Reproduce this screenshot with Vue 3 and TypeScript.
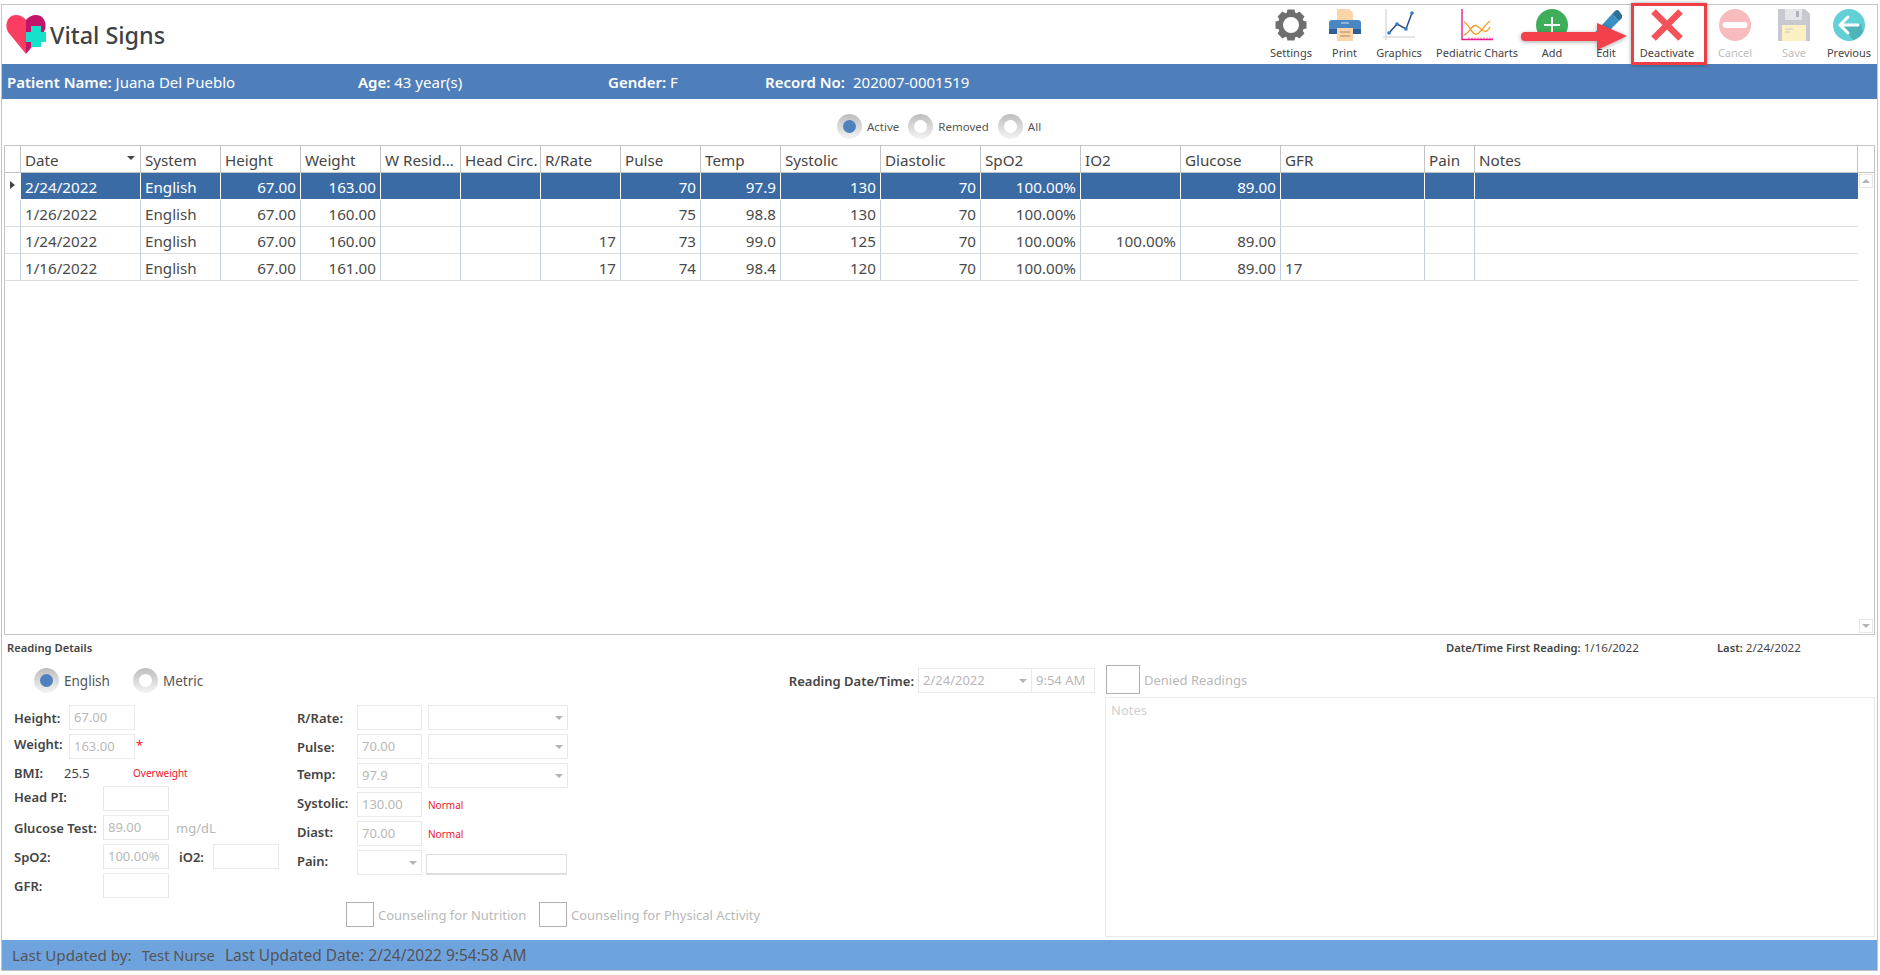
<script setup lang="ts">
interface Col { key: string; label: string; right?: boolean }
const cols: Col[] = [
  { key: 'date', label: 'Date' }, { key: 'system', label: 'System' },
  { key: 'height', label: 'Height', right: true }, { key: 'weight', label: 'Weight', right: true },
  { key: 'wres', label: 'W Resid...', right: true }, { key: 'head', label: 'Head Circ.', right: true },
  { key: 'rr', label: 'R/Rate', right: true }, { key: 'pulse', label: 'Pulse', right: true },
  { key: 'temp', label: 'Temp', right: true }, { key: 'sys', label: 'Systolic', right: true },
  { key: 'dia', label: 'Diastolic', right: true }, { key: 'spo2', label: 'SpO2', right: true },
  { key: 'io2', label: 'IO2', right: true }, { key: 'glu', label: 'Glucose', right: true },
  { key: 'gfr', label: 'GFR' }, { key: 'pain', label: 'Pain' }, { key: 'notes', label: 'Notes' },
]
const rows: Record<string, string>[] = [
  { date: '2/24/2022', system: 'English', height: '67.00', weight: '163.00', pulse: '70', temp: '97.9', sys: '130', dia: '70', spo2: '100.00%', glu: '89.00' },
  { date: '1/26/2022', system: 'English', height: '67.00', weight: '160.00', pulse: '75', temp: '98.8', sys: '130', dia: '70', spo2: '100.00%' },
  { date: '1/24/2022', system: 'English', height: '67.00', weight: '160.00', rr: '17', pulse: '73', temp: '99.0', sys: '125', dia: '70', spo2: '100.00%', io2: '100.00%', glu: '89.00' },
  { date: '1/16/2022', system: 'English', height: '67.00', weight: '161.00', rr: '17', pulse: '74', temp: '98.4', sys: '120', dia: '70', spo2: '100.00%', glu: '89.00', gfr: '17' },
]
const teeth = [0, 45, 90, 135, 180, 225, 270, 315]
const ticks = [8, 11, 14, 17, 20, 23, 26, 29, 32]
</script>

<template>
  <div class="app">
    <header class="top">
      <div class="brand">
        <svg class="logo" viewBox="0 0 40 39" width="40" height="39">
          <path d="M20 39 L2 17 C-2 9 2 0 10 0 C14 0 18 2 20 5 Z" fill="#fb3d62" />
          <path d="M20 39 L38 17 C42 9 38 0 30 0 C26 0 22 2 20 5 Z" fill="#c4146a" />
          <path d="M25 11 H35 V17 H40 V27 H35 V32 H25 V27 H20 V17 H25 Z" fill="#16e2cc" />
        </svg>
        <span class="title">Vital Signs</span>
      </div>
      <nav class="tools">
        <div class="tool">
          <svg class="ico" viewBox="0 0 32 32">
            <path v-for="t in teeth" :key="t" d="M12.5 0.5 H19.5 L21 7 H11 Z" fill="#6f6f6f" :transform="`rotate(${t} 16 16)`" />
            <circle cx="16" cy="16" r="10.5" fill="none" stroke="#6f6f6f" stroke-width="5" />
          </svg>
          <span>Settings</span>
        </div>
        <div class="tool">
          <svg class="ico" viewBox="0 0 32 32">
            <path d="M8 0 H20 L24 4 V11 H8 Z" fill="#fbd5a8" />
            <path d="M3 11 H29 Q32 11 32 14 V25 H0 V14 Q0 11 3 11 Z" fill="#4a86c4" />
            <rect x="0" y="20" width="32" height="5" fill="#2f5f98" />
            <path d="M12 14 H20" stroke="#cfe0f0" stroke-width="1" />
            <rect x="8" y="19" width="16" height="13" fill="#fbd5a8" />
            <path d="M11 23 H21 M11 27 H21" stroke="#b08a60" stroke-width="1.2" />
          </svg>
          <span>Print</span>
        </div>
        <div class="tool">
          <svg class="ico" viewBox="0 0 32 32">
            <path d="M3 0 V31 M0 28 H32" stroke="#dcdcdc" stroke-width="1.4" fill="none" />
            <polyline points="6,24 14,15 23,20 29,4" fill="none" stroke="#2c4f80" stroke-width="1.5" />
            <g fill="#2f80d0">
              <circle cx="6" cy="24" r="1.8" /><circle cx="14" cy="15" r="1.8" />
              <circle cx="23" cy="20" r="1.8" /><circle cx="29" cy="4" r="1.8" />
            </g>
          </svg>
          <span>Graphics</span>
        </div>
        <div class="tool">
          <svg class="ico" viewBox="0 0 32 32">
            <path d="M1 0 V30.5 H32" stroke="#ec1c8c" stroke-width="1.4" fill="none" />
            <path v-for="x in ticks" :key="x" :d="`M${x} 28.5 V30`" stroke="#ec1c8c" stroke-width="0.8" />
            <path d="M3 13 C9 16 11 27 16 25 C21 23 24 15 29 12" fill="none" stroke="#f59a1e" stroke-width="1.3" />
            <path d="M3 26 C9 24 11 14 16 17 C21 20 24 27 29 18" fill="none" stroke="#f59a1e" stroke-width="1.3" />
          </svg>
          <span>Pediatric Charts</span>
        </div>
        <div class="tool">
          <svg class="ico" viewBox="0 0 32 32">
            <circle cx="16" cy="16" r="16" fill="#3fae5a" />
            <path d="M16 8 V24 M8 16 H24" stroke="#fff" stroke-width="2" />
          </svg>
          <span>Add</span>
        </div>
        <div class="tool">
          <svg class="ico" viewBox="0 0 32 32">
            <path d="M2 27 L22 5 L29 12 L9 32 H2 Z" fill="#3a8fc0" />
            <path d="M22 5 L25 2 Q27 0 29 2 L32 6 Q33 8 31 10 L29 12 Z" fill="#2a7099" />
          </svg>
          <span>Edit</span>
        </div>
        <div class="tool">
          <svg class="ico" viewBox="0 0 32 32">
            <path d="M2.5 2.5 L29.5 29.5 M29.5 2.5 L2.5 29.5" stroke="#f4525a" stroke-width="6.5" />
          </svg>
          <span>Deactivate</span>
        </div>
        <div class="tool off">
          <svg class="ico" viewBox="0 0 32 32">
            <circle cx="16" cy="16" r="16" fill="#f8bcbf" />
            <rect x="3.5" y="13" width="25" height="6" rx="3" fill="#fff" />
          </svg>
          <span>Cancel</span>
        </div>
        <div class="tool off">
          <svg class="ico" viewBox="0 0 32 32">
            <path d="M0 0 H27 L32 5 V32 H0 Z" fill="#c6c9d0" />
            <rect x="7" y="0" width="17" height="11" fill="#e4e5e8" />
            <rect x="18" y="2" width="3" height="6" fill="#b0b3ba" />
            <rect x="4" y="16" width="24" height="16" fill="#fbefc4" />
            <path d="M7 20 H15 M7 23 H12" stroke="#c6c9d0" stroke-width="1" />
          </svg>
          <span>Save</span>
        </div>
        <div class="tool">
          <svg class="ico" viewBox="0 0 32 32">
            <circle cx="16" cy="16" r="16" fill="#63cfd6" />
            <path d="M16 15 L28 15 L30 23 A16 16 0 0 1 20 31 L9 17 Z" fill="#4fb3ba" />
            <path d="M15 8 L7 16 L15 24 M7 16 H25" fill="none" stroke="#fff" stroke-width="3" stroke-linecap="round" stroke-linejoin="round" />
          </svg>
          <span>Previous</span>
        </div>
      </nav>
      <div class="highlight"></div>
      <svg class="pointer" viewBox="0 0 108 30" width="108" height="30">
        <path d="M4 10 H76 V1 L106 14 L76 28 V19 H4 Q0 19 0 14.5 Q0 10 4 10 Z" fill="#f4404a" />
      </svg>
    </header>

    <section class="patient">
      <div><b>Patient Name:</b> Juana Del Pueblo</div>
      <div><b>Age:</b> 43 year(s)</div>
      <div><b>Gender:</b> F</div>
      <div><b>Record No:</b><span class="rec">202007-0001519</span></div>
    </section>

    <section class="filters">
      <label class="radio"><i class="dot on"></i>Active</label>
      <label class="radio"><i class="dot"></i>Removed</label>
      <label class="radio"><i class="dot"></i>All</label>
    </section>

    <section class="grid">
      <div class="headrow cols">
        <div class="hc"></div>
        <div v-for="c in cols" :key="c.key" class="hc" :class="{ sorted: c.key === 'date' }">{{ c.label }}</div>
        <div class="hc end"></div>
      </div>
      <div class="gridbody">
        <div class="rowsarea">
          <div v-for="(r, i) in rows" :key="i" class="row cols" :class="{ sel: i === 0 }">
            <div class="rh"><i v-if="i === 0" class="cur"></i></div>
            <div v-for="c in cols" :key="c.key" class="td" :class="{ right: c.right }">{{ r[c.key] }}</div>
          </div>
        </div>
        <div class="vscroll">
          <div class="sbtn"><i class="up"></i></div>
          <div class="sbtn"><i class="down"></i></div>
        </div>
      </div>
    </section>

    <section class="details">
      <div class="dhead">
        <b class="dtitle">Reading Details</b>
        <span class="first"><b>Date/Time First Reading:</b> 1/16/2022</span>
        <span class="last"><b>Last:</b> 2/24/2022</span>
      </div>
      <div class="dbody">
        <div class="dleft">
          <div class="dtop">
            <label class="radio big"><i class="dot on"></i>English</label>
            <label class="radio big"><i class="dot"></i>Metric</label>
            <div class="when">
              <b>Reading Date/Time:</b>
              <div class="box datebox">2/24/2022<i class="arrow"></i></div>
              <div class="box timebox">9:54 AM</div>
            </div>
          </div>
          <div class="form">
            <div class="fa">
              <div class="fr"><b class="l55">Height:</b><div class="box w66">67.00</div></div>
              <div class="fr"><b class="l55 rise3">Weight:</b><div class="box w66">163.00</div><span class="star">*</span></div>
              <div class="fr bmi"><b class="l50">BMI:</b><span class="bmiv">25.5</span><span class="red">Overweight</span></div>
              <div class="fr"><b class="l89 rise">Head PI:</b><div class="box w66"></div></div>
              <div class="fr"><b class="l89">Glucose Test:</b><div class="box w66">89.00</div><span class="unit">mg/dL</span></div>
              <div class="fr"><b class="l89">SpO2:</b><div class="box w66">100.00%</div><b class="io">iO2:</b><div class="box w66"></div></div>
              <div class="fr"><b class="l89">GFR:</b><div class="box w66"></div></div>
            </div>
            <div class="fb">
              <div class="fr"><b class="l60">R/Rate:</b><div class="box w65"></div><div class="box sel140"><i class="arrow"></i></div></div>
              <div class="fr"><b class="l60">Pulse:</b><div class="box w65">70.00</div><div class="box sel140"><i class="arrow"></i></div></div>
              <div class="fr"><b class="l60 rise">Temp:</b><div class="box w65">97.9</div><div class="box sel140"><i class="arrow"></i></div></div>
              <div class="fr"><b class="l60 rise">Systolic:</b><div class="box w65">130.00</div><span class="red norm">Normal</span></div>
              <div class="fr"><b class="l60 rise">Diast:</b><div class="box w65">70.00</div><span class="red norm">Normal</span></div>
              <div class="fr"><b class="l60 rise">Pain:</b><div class="box w65 sel65"><i class="arrow"></i></div><div class="paintxt"></div></div>
            </div>
          </div>
          <div class="counsel">
            <label class="chk first-chk"><i class="cb"></i>Counseling for Nutrition</label>
            <label class="chk"><i class="cb"></i>Counseling for Physical Activity</label>
          </div>
        </div>
        <div class="dright">
          <label class="chk denied"><i class="cb big"></i>Denied Readings</label>
          <div class="notes">Notes</div>
        </div>
      </div>
    </section>

    <footer class="status">
      <span>Last Updated by:</span>
      <span class="who">Test Nurse</span>
      <span class="stamp">Last Updated Date: 2/24/2022 9:54:58 AM</span>
    </footer>
  </div>
</template>

<style>
html, body { margin: 0; background: #fff; }
</style>

<style scoped>
.app {
  position: relative;
  box-sizing: border-box;
  width: 1877px;
  height: 967px;
  margin: 4px 0 0 1px;
  border: 1px solid #c4c4c4;
  font-family: "Noto Sans", "Open Sans", sans-serif;
  font-size: 15px;
  color: #444;
  background: #fff;
  display: flex;
  flex-direction: column;
}
b { font-weight: 600; }
i { font-style: normal; display: block; }

.top { position: relative; height: 59px; display: flex; justify-content: space-between; }
.brand { display: flex; align-items: flex-start; padding: 10px 0 0 4px; }
.logo { display: block; }
.title { font-size: 23.4px; font-weight: 500; color: #3f3f46; line-height: 40px; margin-left: 4px; }
.tools {
  display: grid;
  grid-template-columns: 52px 55px 54px 102px 48px 60px 62px 74px 44px 56px;
  margin-right: 5px;
}
.tool:last-child { margin-left: 10px; }
.tool { display: flex; flex-direction: column; align-items: center; padding-top: 4px; font-size: 11px; color: #444; white-space: nowrap; }
.tool.off { color: #bdbdbd; }
.ico { width: 32px; height: 32px; display: block; margin-bottom: 3px; }
.tool span { line-height: 17px; }
.highlight {
  position: absolute; left: 1629px; top: -2px; width: 76px; height: 62px; box-sizing: border-box;
  border: 3px solid #ee3e45; box-shadow: 0 0 4px rgba(0, 0, 0, 0.35); z-index: 3;
}
.pointer { position: absolute; left: 1519px; top: 17px; z-index: 3; filter: drop-shadow(0 1px 2px rgba(0, 0, 0, 0.35)); }

.patient {
  height: 35px; background: #4f7fba; color: #fff; padding-left: 5px;
  display: grid; grid-template-columns: 351px 250px 157px 1fr; align-items: center; font-size: 15px;
}
.rec { margin-left: 8px; }

.filters { display: flex; padding: 15px 0 6px 835px; height: 25px; box-sizing: content-box; }
.radio { display: flex; align-items: center; gap: 5px; font-size: 11.5px; color: #555; margin-right: 9px; }
.dot {
  width: 25px; height: 25px; border-radius: 50%; box-sizing: border-box; padding: 6px; flex: none;
  background: linear-gradient(#bdbdbd, #f4f4f4); position: relative;
}
.dot::after { content: ""; display: block; width: 13px; height: 13px; border-radius: 50%; background: #fff; }
.dot.on::after { background: #4f81bd; }

.grid { margin: 0 2px; height: 490px; box-sizing: border-box; border: 1px solid #c4c4c4; display: flex; flex-direction: column; }
.cols { display: grid; grid-template-columns: 16px 120px repeat(8, 80px) repeat(5, 100px) 144px 50px 383px; }
.headrow { height: 27px; box-sizing: border-box; border-bottom: 1px solid #c4c4c4; grid-template-columns: 16px 120px repeat(8, 80px) repeat(5, 100px) 144px 50px 383px 1fr; }
.hc { border-right: 1px solid #c4c4c4; padding: 0 4px; font-size: 15.2px; line-height: 28px; color: #454545; white-space: nowrap; overflow: hidden; position: relative; }
.hc.end { border-right: 0; }
.sorted::after {
  content: ""; position: absolute; right: 5px; top: 10px;
  border: 4px solid transparent; border-top: 4px solid #444; border-bottom: 0;
}
.gridbody { flex: 1; display: flex; min-height: 0; }
.rowsarea { width: 1853px; }
.row { height: 27px; box-sizing: border-box; border-bottom: 1px solid #dcdcdc; }
.rh { position: relative; border-right: 1px solid #c0cfe0; }
.cur { position: absolute; left: 5px; top: 8px; border: 4px solid transparent; border-left: 5px solid #444; border-right: 0; }
.td { border-right: 1px solid #c0cfe0; padding: 0 4px; line-height: 28px; height: 26px; font-size: 15.2px; color: #4a4a4a; white-space: nowrap; }
.td.right { text-align: right; }
.td:last-child { border-right: 0; }
.row.sel { background: #3a6ba5; border-bottom-color: #fff; }
.row.sel .td { color: #fff; border-right-color: #fff; }
.row.sel .rh { background: #fff; border-right-color: #fff; }
.vscroll { flex: 1; display: flex; flex-direction: column; justify-content: space-between; padding: 1px 0 1px; align-items: center; }
.sbtn { width: 14px; height: 14px; border: 1px solid #e6e6e6; box-sizing: border-box; display: flex; align-items: center; justify-content: center; }
.up { border: 4px solid transparent; border-bottom: 4px solid #b4b4b4; border-top: 0; }
.down { border: 4px solid transparent; border-top: 4px solid #b4b4b4; border-bottom: 0; }

.details { flex: 1; display: flex; flex-direction: column; min-height: 0; }
.dhead { height: 21px; padding-top: 5px; box-sizing: border-box; display: grid; grid-template-columns: 1439px 271px 1fr; padding-left: 5px; font-size: 11.6px; line-height: 16px; color: #444; }
.dhead b { font-size: 11.2px; }
.dbody { flex: 1; display: flex; min-height: 0; }
.dleft { width: 1103px; flex: none; }
.dtop { display: flex; height: 25px; margin-top: 12px; padding-left: 32px; padding-right: 10px; }
.radio.big { width: 99px; margin: 0; flex: none; font-size: 13.5px; }
.radio.big + .radio.big { width: auto; }
.when { margin-left: auto; display: flex; align-items: center; font-size: 13px; }
.when b { margin-right: 4px; }
.box { height: 25px; box-sizing: border-box; border: 1px solid #e9e9e9; color: #b8b8b8; font-size: 13px; line-height: 23px; padding-left: 4px; position: relative; background: #fff; }
.datebox { width: 114px; }
.timebox { width: 63px; border-left: 0; }
.arrow { position: absolute; right: 4px; top: 10px; border: 4px solid transparent; border-top: 4px solid #b4b4b4; border-bottom: 0; }
.form { display: flex; padding-top: 12px; height: 193px; box-sizing: content-box; }
.fa { width: 295px; padding-left: 12px; box-sizing: border-box; flex: none; }
.fr { display: flex; align-items: center; height: 25px; margin-bottom: 4px; font-size: 13px; color: #444; }
.fr b { white-space: nowrap; flex: none; }
.fr.bmi { height: 23px; margin-bottom: 0; align-items: flex-start; line-height: 20px; }
.rise { position: relative; top: -2px; }
.rise3 { position: relative; top: -3px; }
.l55 { width: 55px; }
.l50 { width: 50px; }
.l89 { width: 89px; }
.l60 { width: 60px; }
.w66 { width: 66px; }
.w65 { width: 65px; }
.bmiv { width: 69px; }
.red { color: #f0142d; font-size: 10px; }
.star { color: #f0142d; font-size: 13px; margin-left: 1px; position: relative; top: -2px; }
.unit { color: #b8b8b8; margin-left: 7px; }
.io { margin-left: 10px; width: 34px; }
.sel140 { width: 140px; margin-left: 6px; }
.norm { margin-left: 6px; }
.sel65 { padding: 0; }
.paintxt { width: 141px; height: 21px; box-sizing: border-box; margin-left: 4px; margin-top: 4px; border: 1px solid #dedede; border-bottom-width: 2px; }
.counsel { display: flex; padding: 4px 0 0 344px; }
.chk { display: flex; align-items: center; font-size: 13px; color: #b8b8b8; white-space: nowrap; }
.first-chk { width: 193px; flex: none; }
.cb { width: 28px; height: 25px; box-sizing: border-box; border: 1px solid #b0b0b0; margin-right: 4px; flex: none; }
.cb.big { width: 34px; height: 29px; }
.dright { flex: 1; display: flex; flex-direction: column; margin-right: 2px; min-width: 0; }
.denied { height: 29px; margin: 9px 0 3px 1px; }
.notes { height: 240px; box-sizing: border-box; border: 1px solid #e9e9e9; color: #d0d0d0; font-size: 13px; padding: 3px 5px; }

.status { height: 30px; flex: none; background: #6fa3de; color: #555; font-size: 15.2px; display: flex; align-items: center; padding-left: 10px; gap: 10px; }
.who { font-size: 14.7px; }
.stamp { font-size: 15.5px; }
</style>
